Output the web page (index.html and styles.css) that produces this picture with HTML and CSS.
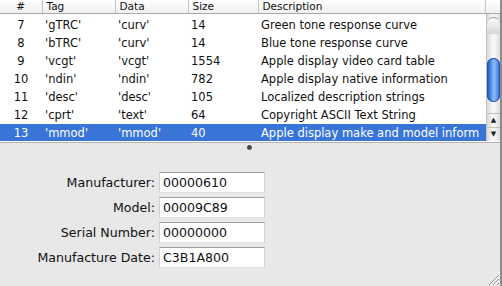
FILE: index.html
```html
<!DOCTYPE html>
<html lang="en">
<head>
  <meta charset="UTF-8">
  <title>ICC Profile Tags</title>
  <link rel="stylesheet" href="styles.css">
</head>
<body>
  <div class="window">
    <div class="table-pane">
      <div class="table-wrap">
        <table class="tags">
          <thead>
            <tr>
              <th class="col-num">#</th>
              <th class="col-tag">Tag</th>
              <th class="col-data">Data</th>
              <th class="col-size">Size</th>
              <th class="col-desc">Description</th>
            </tr>
          </thead>
          <tbody>
            <tr><td class="num">7</td><td>'gTRC'</td><td>'curv'</td><td>14</td><td>Green tone response curve</td></tr>
            <tr><td class="num">8</td><td>'bTRC'</td><td>'curv'</td><td>14</td><td>Blue tone response curve</td></tr>
            <tr><td class="num">9</td><td>'vcgt'</td><td>'vcgt'</td><td>1554</td><td>Apple display video card table</td></tr>
            <tr><td class="num">10</td><td>'ndin'</td><td>'ndin'</td><td>782</td><td>Apple display native information</td></tr>
            <tr><td class="num">11</td><td>'desc'</td><td>'desc'</td><td>105</td><td>Localized description strings</td></tr>
            <tr><td class="num">12</td><td>'cprt'</td><td>'text'</td><td>64</td><td>Copyright ASCII Text String</td></tr>
            <tr class="selected"><td class="num">13</td><td>'mmod'</td><td>'mmod'</td><td>40</td><td>Apple display make and model inform</td></tr>
          </tbody>
        </table>
      </div>
      <div class="scroll-col">
        <div class="corner"></div>
        <div class="scrollbar">
          <div class="track">
            <div class="track-cap"></div>
            <div class="thumb"></div>
          </div>
          <div class="arrow up">&#9650;</div>
          <div class="arrow down">&#9660;</div>
        </div>
      </div>
    </div>
    <div class="splitter"><span class="dimple"></span></div>
    <div class="detail-pane">
      <div class="fields">
        <label>Manufacturer:</label>
        <div class="field">00000610</div>
        <label>Model:</label>
        <div class="field">00009C89</div>
        <label>Serial Number:</label>
        <div class="field">00000000</div>
        <label>Manufacture Date:</label>
        <div class="field">C3B1A800</div>
      </div>
      <svg class="grip" width="14" height="14" viewBox="0 0 14 14">
        <path d="M13 3 L3 13 M13 7 L7 13 M13 11 L11 13" stroke="#8a8a8a" stroke-width="1"/>
        <path d="M13 4 L4 13 M13 8 L8 13" stroke="#fff" stroke-width="1"/>
      </svg>
    </div>
  </div>
</body>
</html>
```

FILE: styles.css
```css
body {
  margin: 0;
  background-color: #e8e8e8;
  font-family: "DejaVu Sans", "Liberation Sans", sans-serif;
  color: #111;
}
.window {
  width: 500px;
  height: 286px;
  display: flex;
  flex-direction: column;
  border-right: 2px solid #8c8c8c;
  overflow: hidden;
}
.table-pane {
  display: flex;
  height: 141px;
  background: white;
  overflow: hidden;
}
.table-wrap {
  width: 486px;
  overflow: hidden;
}
.tags {
  border-collapse: collapse;
  table-layout: fixed;
  width: 486px;
  font-size: 11.5px;
}
.tags th {
  box-sizing: border-box;
  height: 13px;
  padding: 0 0 0 4px;
  font-size: 10.5px;
  font-weight: normal;
  text-align: left;
  line-height: 13px;
  background: linear-gradient(#ffffff, #f0f0f0);
  border-bottom: 1px solid #a8a8a8;
  border-right: 1px solid #c4c4c4;
  white-space: nowrap;
}
.tags th.col-num {
  text-align: center;
  padding-left: 0;
}
.col-num { width: 42px; }
.col-tag { width: 73px; }
.col-data { width: 73px; }
.col-size { width: 70px; }
.tags tbody tr:first-child td {
  padding-top: 2px;
}
.tags td {
  height: 17px;
  padding: 0 0 0 3px;
  line-height: 18px;
  white-space: nowrap;
  overflow: hidden;
}
.tags td.num {
  text-align: center;
  padding-left: 0;
}
.tags tr.selected td {
  background-color: #3875d7;
  color: white;
}
.scroll-col {
  width: 14px;
  display: flex;
  flex-direction: column;
}
.corner {
  height: 13px;
  background: linear-gradient(#ffffff, #f0f0f0);
  border-bottom: 1px solid #a8a8a8;
}
.scrollbar {
  flex: 1;
  display: flex;
  flex-direction: column;
  background: linear-gradient(90deg, #d8d8d8, #f6f6f6 40%, #f6f6f6 60%, #dcdcdc);
  border-left: 1px solid #c4c4c4;
}
.track {
  flex: 1;
  position: relative;
}
.track-cap {
  margin-top: 3px;
  height: 16px;
  border-radius: 7px 7px 0 0;
  background: linear-gradient(#fdfdfd, #d4d4d4);
  border-top: 1px solid #9a9a9a;
}
.thumb {
  position: absolute;
  top: 44px;
  left: 0;
  width: 13px;
  height: 44px;
  border-radius: 7px;
  background: linear-gradient(90deg, #1848c0, #5f98ec 35%, #8fbdf8 55%, #2c6ad8);
  box-shadow: inset 0 0 0 1px #2050b0;
}
.arrow {
  height: 13px;
  font-size: 7px;
  line-height: 13px;
  text-align: center;
  color: #222;
  border-top: 1px solid #c0c0c0;
}
.splitter {
  height: 10px;
  border-top: 1px solid #ffffff;
  box-shadow: inset 0 1px 0 #b4b4b4;
  display: flex;
  justify-content: center;
  align-items: center;
}
.dimple {
  width: 5px;
  height: 5px;
  margin-left: -2px;
  border-radius: 50%;
  background: radial-gradient(circle at 35% 35%, #333, #777);
}
.detail-pane {
  flex: 1;
  position: relative;
}
.fields {
  display: grid;
  grid-template-columns: 155px 106px;
  column-gap: 4px;
  row-gap: 4px;
  padding-top: 20px;
  align-items: center;
}
.fields label {
  text-align: right;
  font-size: 12.6px;
}
.field {
  height: 19px;
  line-height: 20px;
  padding-left: 3px;
  font-size: 12.6px;
  background: white;
  border-top: 1px solid #9c9c9c;
  border-left: 1px solid #d2d2d2;
  border-right: 1px solid #d2d2d2;
  border-bottom: 1px solid #e2e2e2;
}
.grip {
  position: absolute;
  right: 0;
  bottom: 0;
}
```
